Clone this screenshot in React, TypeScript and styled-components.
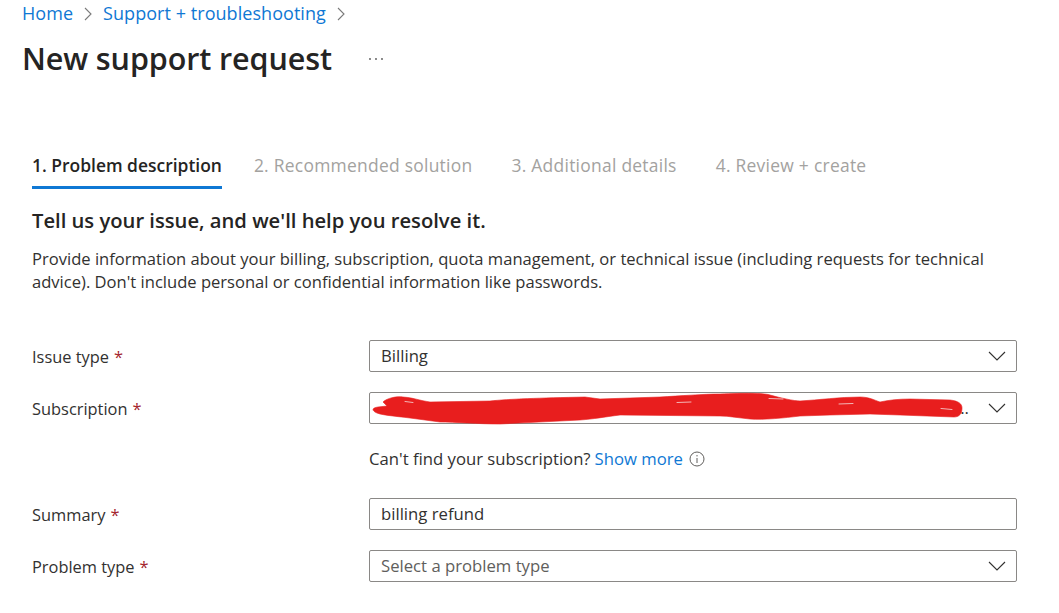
import * as React from 'react';
import styled, { createGlobalStyle } from 'styled-components';

const GlobalStyle = createGlobalStyle`
  html, body {
    margin: 0;
    background: #fff;
    overflow: hidden;
  }
  body {
    font-family: 'Open Sans', 'Noto Sans', sans-serif;
    color: #292827;
  }
`;

const Page = styled.main`
  width: 1059px;
  height: 613px;
  overflow: hidden;
  box-sizing: border-box;
`;

const Breadcrumb = styled.nav`
  display: flex;
  align-items: center;
  height: 26px;
  padding-left: 22px;
  font-size: 18px;
  letter-spacing: 0.05px;
`;

const CrumbLink = styled.a`
  color: #0f78d4;
`;

const CrumbChevron = styled.svg`
  width: 9px;
  height: 14px;
  margin: 1px 10px 0 11px;
  fill: none;
  stroke: #7a7a7a;
  stroke-width: 1.1;
`;

const TitleRow = styled.header`
  display: flex;
  align-items: center;
  height: 36px;
  margin-top: 14px;
  padding-left: 22px;
`;

const Title = styled.h1`
  margin: 0;
  font-size: 30.5px;
  font-weight: 600;
  color: #252423;
  letter-spacing: -0.1px;
`;

const More = styled.svg`
  width: 16px;
  height: 4px;
  margin: 2px 0 0 36px;
  fill: #555;
`;

const Tabs = styled.div`
  display: flex;
  gap: 39px;
  margin-top: 77px;
  height: 36px;
`;

const Tab = styled.div<{ $active?: boolean }>`
  box-sizing: border-box;
  height: 36px;
  margin-right: ${(p) => (p.$active ? -7 : 0)}px;
  font-size: 17.45px;
  font-weight: ${(p) => (p.$active ? 600 : 400)};
  color: ${(p) => (p.$active ? '#252423' : '#a3a2a0')};
  border-bottom: 3px solid ${(p) => (p.$active ? '#0f78d4' : 'transparent')};
  letter-spacing: ${(p) => (p.$active ? 0 : 0.26)}px;
`;

const Section = styled.section`
  padding: 0 32px;
`;

const Heading = styled.h2`
  margin: 16px 0 0;
  font-size: 20.2px;
  line-height: 30px;
  font-weight: 600;
  color: #252423;
`;

const Intro = styled.p`
  margin: 12px 0 0;
  width: 985px;
  font-size: 16.57px;
  line-height: 23px;
  color: #323130;
`;

const Form = styled.form`
  display: flex;
  flex-direction: column;
  margin-top: 47px;
`;

const Row = styled.div<{ $gap?: number }>`
  display: grid;
  grid-template-columns: 337px 648px;
  align-items: center;
  margin-bottom: ${(p) => p.$gap ?? 20}px;
`;

const Label = styled.label`
  font-size: 16.4px;
  color: #323130;
`;

const Required = styled.span`
  color: #a4262c;
  margin-left: 5px;
`;

const Field = styled.div`
  position: relative;
  box-sizing: border-box;
  display: flex;
  align-items: center;
  justify-content: space-between;
  height: 32px;
  padding: 0 11px 2px;
  border: 1px solid #8a8886;
  border-radius: 2px;
  font-size: 16.7px;
  color: #323130;
`;

const Placeholder = styled.span`
  color: #605e5c;
`;

const Chevron = styled.svg`
  flex: none;
  width: 18px;
  height: 10px;
  margin: 2px -1px 0 0;
  fill: none;
  stroke: #323130;
  stroke-width: 1.1;
`;

const HiddenValue = styled.span`
  flex: 1;
  padding-right: 19px;
  text-align: right;
  color: #323130;
`;

const Scribble = styled.svg`
  position: absolute;
  left: -1px;
  top: -1px;
  width: 648px;
  height: 32px;
  overflow: visible;
  pointer-events: none;
`;

const ScribbleFill = styled.path`
  fill: #e81e1e;
  stroke: #e81e1e;
  stroke-width: 0.6;
  stroke-linejoin: round;
`;

const ScribbleGap = styled.path`
  fill: none;
  stroke: #f4b6b6;
  stroke-width: 1;
  stroke-linecap: round;
`;

const Help = styled.div`
  grid-column: 2;
  box-sizing: border-box;
  display: flex;
  align-items: center;
  height: 24px;
  padding-bottom: 2px;
  font-size: 16.7px;
  color: #323130;
`;

const HelpLink = styled.a`
  margin-left: 4px;
  color: #0f78d4;
`;

const InfoIcon = styled.svg`
  width: 16px;
  height: 16px;
  margin: 1px 0 0 6px;
  fill: none;
  stroke: #605e5c;
`;

const SelectChevron = () => (
  <Chevron viewBox="0 0 18 10">
    <path d="M1 1l8 8 8-8" />
  </Chevron>
);

export default function App() {
  return (
    <Page>
      <GlobalStyle />
      <Breadcrumb>
        <CrumbLink>Home</CrumbLink>
        <CrumbChevron viewBox="0 0 9 14">
          <path d="M1 1l6 6-6 6" />
        </CrumbChevron>
        <CrumbLink>Support + troubleshooting</CrumbLink>
        <CrumbChevron viewBox="0 0 9 14">
          <path d="M1 1l6 6-6 6" />
        </CrumbChevron>
      </Breadcrumb>
      <TitleRow>
        <Title>New support request</Title>
        <More viewBox="0 0 16 4">
          <circle cx="2" cy="2" r="0.9" />
          <circle cx="8" cy="2" r="0.9" />
          <circle cx="14" cy="2" r="0.9" />
        </More>
      </TitleRow>
      <Section>
        <Tabs>
          <Tab $active>1. Problem description</Tab>
          <Tab>2. Recommended solution</Tab>
          <Tab>3. Additional details</Tab>
          <Tab>4. Review + create</Tab>
        </Tabs>
        <Heading>Tell us your issue, and we'll help you resolve it.</Heading>
        <Intro>
          Provide information about your billing, subscription, quota management, or technical issue (including
          requests for technical advice). Don't include personal or confidential information like passwords.
        </Intro>
        <Form>
          <Row>
            <Label>
              Issue type<Required>*</Required>
            </Label>
            <Field>
              Billing
              <SelectChevron />
            </Field>
          </Row>
          <Row $gap={23}>
            <Label>
              Subscription<Required>*</Required>
            </Label>
            <Field>
              <HiddenValue>...</HiddenValue>
              <SelectChevron />
              <Scribble viewBox="0 0 648 32">
                <ScribbleFill d="M14 10C18 6 28 4 34 5C42 5 52 9 61 10L121 9C140 7 170 6 216 5L231 7L291 5C310 4 335 2 351 2C375 1 395 1 401 3C412 6 425 9 431 9C450 8 470 5 491 5C500 5 505 8 511 10C520 8 530 7 541 7L581 8C590 9 593 12 593 16C593 22 590 25 585 25L531 23L501 22L461 23L431 24C415 26 395 28 381 27C370 26 360 24 351 24L251 23C235 25 225 27 211 28L131 32C110 32 85 30 71 30L41 26C25 24 10 23 6 20C3 18 3 16 9 15L18 14Z" />
                <ScribbleGap d="M36 9.500L44 10.500" />
                <ScribbleGap d="M308 10.500L322 10" />
                <ScribbleGap d="M400 6.500L414 7" />
                <ScribbleGap d="M470 12L484 11.500" />
                <ScribbleGap d="M572 16.500L583 17.500" />
              </Scribble>
            </Field>
          </Row>
          <Row $gap={27}>
            <Help>
              Can't find your subscription?
              <HelpLink>Show more</HelpLink>
              <InfoIcon viewBox="0 0 16 16">
                <circle cx="8" cy="8" r="7" />
                <path d="M8 7v5M8 4v1.4" />
              </InfoIcon>
            </Help>
          </Row>
          <Row>
            <Label>
              Summary<Required>*</Required>
            </Label>
            <Field>billing refund</Field>
          </Row>
          <Row>
            <Label>
              Problem type<Required>*</Required>
            </Label>
            <Field>
              <Placeholder>Select a problem type</Placeholder>
              <SelectChevron />
            </Field>
          </Row>
        </Form>
      </Section>
    </Page>
  );
}
